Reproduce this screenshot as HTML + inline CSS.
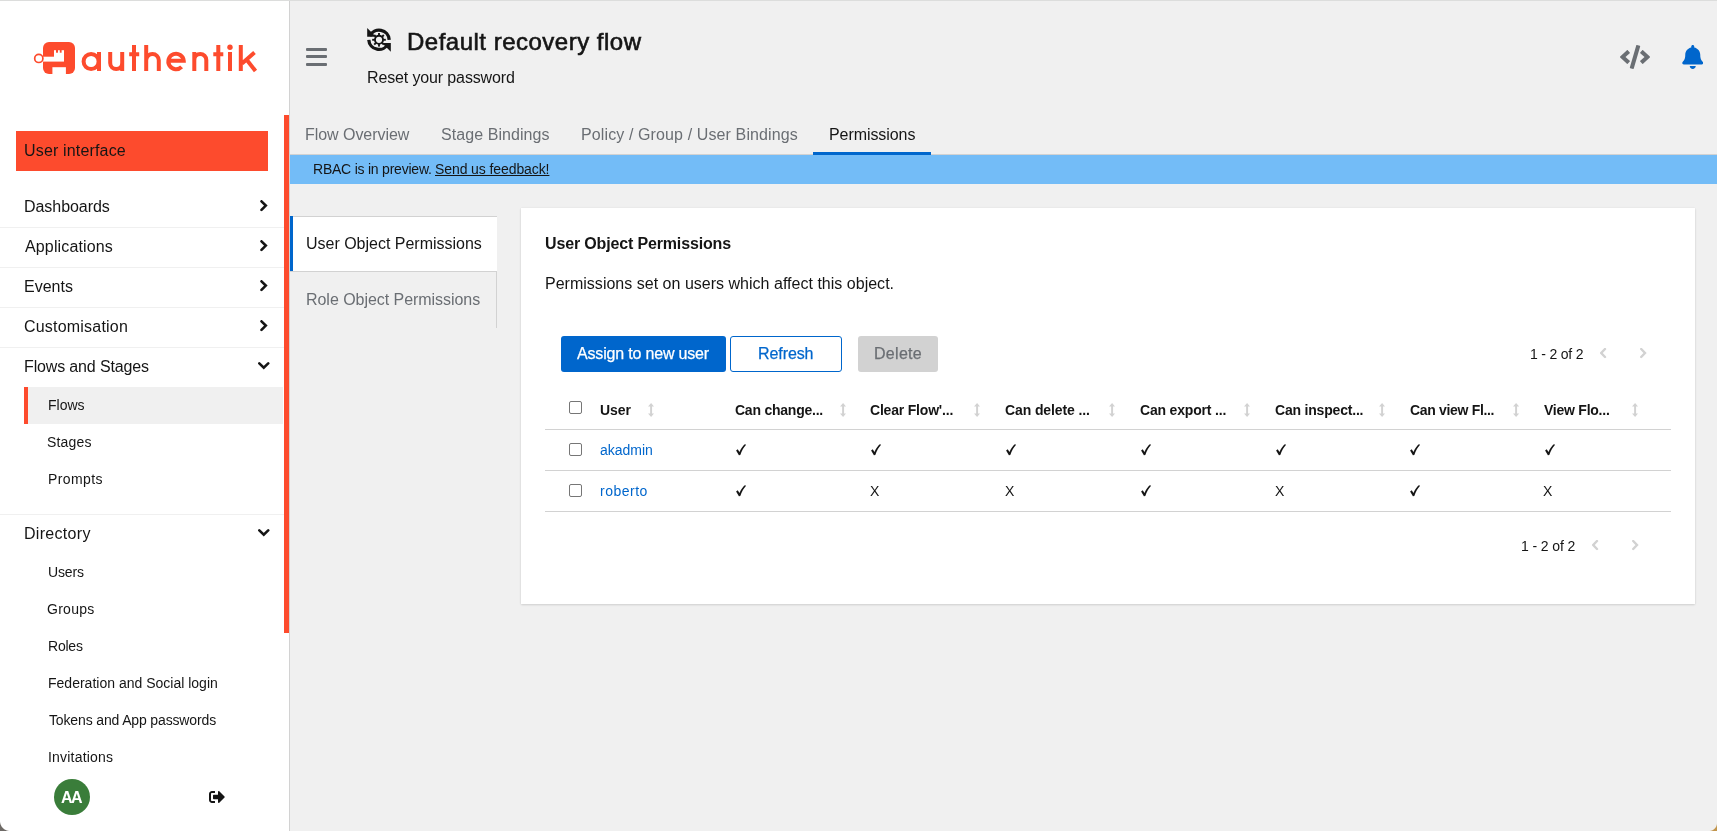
<!DOCTYPE html>
<html><head><meta charset="utf-8">
<style>
*{margin:0;padding:0;box-sizing:border-box}
html,body{width:1717px;height:831px;overflow:hidden;background:#f0f0f0;font-family:"Liberation Sans",sans-serif;color:#151515}
.ab{position:absolute;display:block}
.t{position:absolute;white-space:nowrap;will-change:transform}
.cb{position:absolute;width:13px;height:13px;border:1px solid #767676;border-radius:2px;background:#fff}
</style></head>
<body>
<!-- main bg -->
<div class="ab" style="left:0;top:0;width:1717px;height:831px;background:#f0f0f0"></div>
<!-- sidebar -->
<div class="ab" style="left:0;top:0;width:289px;height:831px;background:#fff"></div>
<div class="ab" style="left:289px;top:0;width:1px;height:831px;background:#d2d2d2"></div>
<!-- sidebar scrollbar -->
<div class="ab" style="left:284px;top:115px;width:5px;height:518px;background:#fd4b2d"></div>
<!-- top line -->
<div class="ab" style="left:0;top:0;width:1717px;height:1px;background:#dcdddc"></div>
<!-- logo -->
<svg class="ab" style="left:0;top:0" width="289" height="100" viewBox="0 0 289 100">
 <g fill="#fd4b2d">
  <rect x="43" y="42" width="32" height="32" rx="6"/>
 </g>
 <g fill="#fff">
  <rect x="43" y="56.7" width="21" height="4.9"/>
  <rect x="54" y="50.2" width="10" height="7"/>
  <rect x="52.4" y="67.2" width="13.5" height="7"/>
 </g>
 <g fill="#fd4b2d">
  <rect x="56" y="49.5" width="2" height="3.2"/>
  <rect x="59.8" y="49.5" width="1.8" height="3.2"/>
 </g>
 <circle cx="38.8" cy="58.4" r="4.1" fill="none" stroke="#fd4b2d" stroke-width="1.7"/>
 <g fill="none" stroke="#fd4b2d" stroke-width="4">
  <circle cx="91.1" cy="61.5" r="7.5"/>
  <path d="M99 52 V71"/>
  <path d="M110.2 52 V63 A6 6 0 0 0 122.2 63 M122.2 52 V71"/>
  <path d="M134 45 V71 M129.2 54.2 H139.2"/>
  <path d="M146.2 45 V71 M146.2 71 V60.3 A6.3 6.3 0 0 1 158.8 60.3 V71"/>
  <path d="M168.3 60.8 H183.7 A7.7 7.7 0 1 0 181.6 66.8"/>
  <path d="M194.3 52 V71 M194.3 71 V60 A6 6 0 0 1 206.3 60 V71"/>
  <path d="M218.3 45 V71 M213.3 54.2 H223.3"/>
  <path d="M230 52 V71"/>
  <path d="M240.8 45 V71 M242 63.5 L254.5 52.5 M246.5 59.5 L255.5 71"/>
 </g>
 <circle cx="230" cy="47.2" r="2.7" fill="#fd4b2d"/>
</svg>
<!-- user interface button -->
<div class="ab" style="left:16px;top:131px;width:252px;height:40px;background:#fd4b2d"></div>
<!-- flows highlight -->
<div class="ab" style="left:24px;top:387px;width:259px;height:37px;background:#f0f0f0"></div>
<div class="ab" style="left:24px;top:387px;width:4px;height:37px;background:#fd4b2d"></div>
<!-- avatar -->
<div class="ab" style="left:54px;top:779px;width:36px;height:36px;border-radius:50%;background:#3a7d3a"></div>
<!-- logout -->
<svg class="ab" style="left:209px;top:789px" width="16" height="16" viewBox="0 0 512 512"><path fill="#151515" d="M497 273L329 441c-15 15-41 4.5-41-17v-96H152c-13.3 0-24-10.7-24-24v-96c0-13.3 10.7-24 24-24h136V88c0-21.4 25.9-32 41-17l168 168c9.3 9.4 9.3 24.6 0 34zM192 436v-40c0-6.6-5.4-12-12-12H96c-17.7 0-32-14.3-32-32V160c0-17.7 14.3-32 32-32h84c6.6 0 12-5.4 12-12V76c0-6.6-5.4-12-12-12H96c-53 0-96 43-96 96v192c0 53 43 96 96 96h84c6.6 0 12-5.4 12-12z"/></svg>

<!-- header hamburger -->
<div class="ab" style="left:306px;top:48px;width:21px;height:3px;border-radius:1px;background:#6a6e73"></div>
<div class="ab" style="left:306px;top:55.3px;width:21px;height:3.2px;border-radius:1px;background:#6a6e73"></div>
<div class="ab" style="left:306px;top:63px;width:21px;height:3px;border-radius:1px;background:#6a6e73"></div>
<!-- sync gear icon -->
<svg class="ab" style="left:363px;top:24px" width="32" height="32" viewBox="0 0 32 32">
 <g fill="none" stroke="#151515" stroke-width="3.3">
  <path d="M6.8 12.0 A10.2 10.2 0 0 1 26.2 15.8"/>
  <path d="M25.2 19.6 A10.2 10.2 0 0 1 5.8 15.8"/>
  <circle cx="16" cy="15.8" r="4.05" stroke-width="1.9"/>
 </g>
 <g fill="#151515">
  <path d="M4.2 3.9 L4.2 12.7 L12.9 12.7 Z"/>
  <path d="M27.8 27.7 L27.8 19.1 L19.1 19.1 Z"/>
  <g transform="translate(16 15.8)">
   <rect x="-0.95" y="-6.8" width="1.9" height="2.6"/>
   <rect x="-0.95" y="-6.8" width="1.9" height="2.6" transform="rotate(45)"/>
   <rect x="-0.95" y="-6.8" width="1.9" height="2.6" transform="rotate(90)"/>
   <rect x="-0.95" y="-6.8" width="1.9" height="2.6" transform="rotate(135)"/>
   <rect x="-0.95" y="-6.8" width="1.9" height="2.6" transform="rotate(180)"/>
   <rect x="-0.95" y="-6.8" width="1.9" height="2.6" transform="rotate(225)"/>
   <rect x="-0.95" y="-6.8" width="1.9" height="2.6" transform="rotate(270)"/>
   <rect x="-0.95" y="-6.8" width="1.9" height="2.6" transform="rotate(315)"/>
  </g>
 </g>
</svg>
<!-- code icon -->
<svg class="ab" style="left:1620px;top:45px" width="30" height="24" viewBox="0 0 640 512"><path fill="#6a6e73" d="M278.9 511.5l-61-17.7c-6.4-1.8-10-8.5-8.2-14.9L346.2 8.7c1.8-6.4 8.5-10 14.9-8.2l61 17.7c6.4 1.8 10 8.5 8.2 14.9L293.8 503.3c-1.9 6.4-8.5 10.1-14.9 8.2zm-114-112.2l43.5-46.4c4.6-4.9 4.300-12.7-.8-17.2L117 256l90.6-79.7c5.1-4.5 5.5-12.3.8-17.2l-43.5-46.4c-4.5-4.8-12.1-5.1-17-.5L3.8 247.2c-5.1 4.7-5.1 12.8 0 17.5l144.1 135.1c4.9 4.6 12.5 4.4 17-.5zm327.2.6l144.1-135.1c5.1-4.7 5.1-12.8 0-17.5L492.1 112.1c-4.8-4.5-12.4-4.3-17 .5L431.6 159c-4.6 4.9-4.3 12.7.8 17.2L523 256l-90.6 79.7c-5.1 4.5-5.5 12.3-.8 17.2l43.5 46.4c4.5 4.9 12.1 5.1 17 .6z"/></svg>
<!-- bell -->
<svg class="ab" style="left:1681.5px;top:45px" width="21.5" height="24" viewBox="0 0 448 512"><path fill="#0066cc" d="M224 512c35.32 0 63.97-28.65 63.970-64H160.03c0 35.35 28.65 64 63.97 64zm215.39-149.71c-19.32-20.76-55.47-51.99-55.47-154.29 0-77.7-54.48-139.9-127.94-155.16V32c0-17.67-14.32-32-31.98-32s-31.98 14.33-31.98 32v20.84C118.56 68.1 64.08 130.3 64.08 208c0 102.3-36.15 133.53-55.47 154.29-6 6.45-8.66 14.16-8.610 21.71.11 16.4 12.98 32 32.1 32h383.8c19.12 0 32-15.6 32.1-32 .05-7.55-2.61-15.27-8.61-21.71z"/></svg>

<!-- tab bar border + active underline -->
<div class="ab" style="left:290px;top:154px;width:1427px;height:1px;background:#d2d2d2"></div>
<div class="ab" style="left:813px;top:152px;width:118px;height:3px;background:#0066cc"></div>
<!-- banner -->
<div class="ab" style="left:290px;top:155px;width:1427px;height:29px;background:#73bcf7"></div>

<!-- vertical tabs -->
<div class="ab" style="left:290px;top:216px;width:207px;height:56px;background:#fff;border-top:1px solid #d2d2d2"></div>
<div class="ab" style="left:290px;top:216px;width:3px;height:56px;background:#0066cc"></div>
<div class="ab" style="left:290px;top:271px;width:207px;height:1px;background:#d2d2d2"></div>
<div class="ab" style="left:496px;top:271px;width:1px;height:57px;background:#d2d2d2"></div>

<!-- card -->
<div class="ab" style="left:521px;top:208px;width:1174px;height:396px;background:#fff;box-shadow:0 1px 2px 0 rgba(3,3,3,.12),0 0 2px 0 rgba(3,3,3,.06)"></div>
<!-- buttons -->
<div class="ab" style="left:561px;top:336px;width:165px;height:36px;background:#0066cc;border-radius:3px"></div>
<div class="ab" style="left:730px;top:336px;width:112px;height:36px;background:#fff;border:1px solid #0066cc;border-radius:3px"></div>
<div class="ab" style="left:858px;top:336px;width:80px;height:36px;background:#d2d2d2;border-radius:3px"></div>
<!-- table lines -->
<div class="ab" style="left:545px;top:429px;width:1126px;height:1px;background:#d2d2d2"></div>
<div class="ab" style="left:545px;top:470px;width:1126px;height:1px;background:#d2d2d2"></div>
<div class="ab" style="left:545px;top:511px;width:1126px;height:1px;background:#d2d2d2"></div>

<div class="ab" style="left:0;top:227px;width:284px;height:1px;background:#f0f0f0"></div>
<div class="ab" style="left:0;top:267px;width:284px;height:1px;background:#f0f0f0"></div>
<div class="ab" style="left:0;top:307px;width:284px;height:1px;background:#f0f0f0"></div>
<div class="ab" style="left:0;top:347px;width:284px;height:1px;background:#f0f0f0"></div>
<div class="ab" style="left:0;top:514px;width:284px;height:1px;background:#f0f0f0"></div>
<svg class="ab" style="left:259.5px;top:199.6px" width="8" height="12" viewBox="0 0 8 12"><path d="M1.5 1.3 L5.8 5.6 L1.5 9.9" stroke="#151515" stroke-width="2.6" fill="none" stroke-linecap="round" stroke-linejoin="miter"/></svg>
<svg class="ab" style="left:259.5px;top:239.6px" width="8" height="12" viewBox="0 0 8 12"><path d="M1.5 1.3 L5.8 5.6 L1.5 9.9" stroke="#151515" stroke-width="2.6" fill="none" stroke-linecap="round" stroke-linejoin="miter"/></svg>
<svg class="ab" style="left:259.5px;top:279.6px" width="8" height="12" viewBox="0 0 8 12"><path d="M1.5 1.3 L5.8 5.6 L1.5 9.9" stroke="#151515" stroke-width="2.6" fill="none" stroke-linecap="round" stroke-linejoin="miter"/></svg>
<svg class="ab" style="left:259.5px;top:319.6px" width="8" height="12" viewBox="0 0 8 12"><path d="M1.5 1.3 L5.8 5.6 L1.5 9.9" stroke="#151515" stroke-width="2.6" fill="none" stroke-linecap="round" stroke-linejoin="miter"/></svg>
<svg class="ab" style="left:258px;top:361.5px" width="12" height="8" viewBox="0 0 12 8"><path d="M1.3 1.4 L5.75 5.6 L10.2 1.4" stroke="#151515" stroke-width="2.6" fill="none" stroke-linecap="round"/></svg>
<svg class="ab" style="left:258px;top:528.5px" width="12" height="8" viewBox="0 0 12 8"><path d="M1.3 1.4 L5.75 5.6 L10.2 1.4" stroke="#151515" stroke-width="2.6" fill="none" stroke-linecap="round"/></svg>
<div class="cb" style="left:569px;top:401px"></div>
<div class="cb" style="left:569px;top:443px"></div>
<div class="cb" style="left:569px;top:484px"></div>
<svg class="ab" style="left:648.1px;top:403px" width="6.2" height="14" viewBox="0 0 7 14" preserveAspectRatio="none"><path d="M3.5 0 L7 3.6 L4.6 3.6 L4.6 10.4 L7 10.4 L3.5 14 L0 10.4 L2.4 10.4 L2.4 3.6 L0 3.6 Z" fill="#d2d2d2"/></svg>
<svg class="ab" style="left:840.1px;top:403px" width="6.2" height="14" viewBox="0 0 7 14" preserveAspectRatio="none"><path d="M3.5 0 L7 3.6 L4.6 3.6 L4.6 10.4 L7 10.4 L3.5 14 L0 10.4 L2.4 10.4 L2.4 3.6 L0 3.6 Z" fill="#d2d2d2"/></svg>
<svg class="ab" style="left:974.1px;top:403px" width="6.2" height="14" viewBox="0 0 7 14" preserveAspectRatio="none"><path d="M3.5 0 L7 3.6 L4.6 3.6 L4.6 10.4 L7 10.4 L3.5 14 L0 10.4 L2.4 10.4 L2.4 3.6 L0 3.6 Z" fill="#d2d2d2"/></svg>
<svg class="ab" style="left:1109.3px;top:403px" width="6.2" height="14" viewBox="0 0 7 14" preserveAspectRatio="none"><path d="M3.5 0 L7 3.6 L4.6 3.6 L4.6 10.4 L7 10.4 L3.5 14 L0 10.4 L2.4 10.4 L2.4 3.6 L0 3.6 Z" fill="#d2d2d2"/></svg>
<svg class="ab" style="left:1243.8999999999999px;top:403px" width="6.2" height="14" viewBox="0 0 7 14" preserveAspectRatio="none"><path d="M3.5 0 L7 3.6 L4.6 3.6 L4.6 10.4 L7 10.4 L3.5 14 L0 10.4 L2.4 10.4 L2.4 3.6 L0 3.6 Z" fill="#d2d2d2"/></svg>
<svg class="ab" style="left:1378.8px;top:403px" width="6.2" height="14" viewBox="0 0 7 14" preserveAspectRatio="none"><path d="M3.5 0 L7 3.6 L4.6 3.6 L4.6 10.4 L7 10.4 L3.5 14 L0 10.4 L2.4 10.4 L2.4 3.6 L0 3.6 Z" fill="#d2d2d2"/></svg>
<svg class="ab" style="left:1513.3999999999999px;top:403px" width="6.2" height="14" viewBox="0 0 7 14" preserveAspectRatio="none"><path d="M3.5 0 L7 3.6 L4.6 3.6 L4.6 10.4 L7 10.4 L3.5 14 L0 10.4 L2.4 10.4 L2.4 3.6 L0 3.6 Z" fill="#d2d2d2"/></svg>
<svg class="ab" style="left:1632.1px;top:403px" width="6.2" height="14" viewBox="0 0 7 14" preserveAspectRatio="none"><path d="M3.5 0 L7 3.6 L4.6 3.6 L4.6 10.4 L7 10.4 L3.5 14 L0 10.4 L2.4 10.4 L2.4 3.6 L0 3.6 Z" fill="#d2d2d2"/></svg>
<svg class="ab" style="left:736.3px;top:443.5px" width="11" height="12" viewBox="0 0 11 12"><path d="M0.1 6.5 L1.7 5.3 L3.5 7.9 C4.9 4.7 6.8 1.9 9.1 0.0 L9.9 1.0 C7.7 3.3 5.7 6.7 4.3 11.1 L2.9 11.2 Z" fill="#151515"/></svg>
<svg class="ab" style="left:870.9px;top:443.5px" width="11" height="12" viewBox="0 0 11 12"><path d="M0.1 6.5 L1.7 5.3 L3.5 7.9 C4.9 4.7 6.8 1.9 9.1 0.0 L9.9 1.0 C7.7 3.3 5.7 6.7 4.3 11.1 L2.9 11.2 Z" fill="#151515"/></svg>
<svg class="ab" style="left:1006.1px;top:443.5px" width="11" height="12" viewBox="0 0 11 12"><path d="M0.1 6.5 L1.7 5.3 L3.5 7.9 C4.9 4.7 6.8 1.9 9.1 0.0 L9.9 1.0 C7.7 3.3 5.7 6.7 4.3 11.1 L2.9 11.2 Z" fill="#151515"/></svg>
<svg class="ab" style="left:1140.7px;top:443.5px" width="11" height="12" viewBox="0 0 11 12"><path d="M0.1 6.5 L1.7 5.3 L3.5 7.9 C4.9 4.7 6.8 1.9 9.1 0.0 L9.9 1.0 C7.7 3.3 5.7 6.7 4.3 11.1 L2.9 11.2 Z" fill="#151515"/></svg>
<svg class="ab" style="left:1275.6px;top:443.5px" width="11" height="12" viewBox="0 0 11 12"><path d="M0.1 6.5 L1.7 5.3 L3.5 7.9 C4.9 4.7 6.8 1.9 9.1 0.0 L9.9 1.0 C7.7 3.3 5.7 6.7 4.3 11.1 L2.9 11.2 Z" fill="#151515"/></svg>
<svg class="ab" style="left:1410.2px;top:443.5px" width="11" height="12" viewBox="0 0 11 12"><path d="M0.1 6.5 L1.7 5.3 L3.5 7.9 C4.9 4.7 6.8 1.9 9.1 0.0 L9.9 1.0 C7.7 3.3 5.7 6.7 4.3 11.1 L2.9 11.2 Z" fill="#151515"/></svg>
<svg class="ab" style="left:1544.5px;top:443.5px" width="11" height="12" viewBox="0 0 11 12"><path d="M0.1 6.5 L1.7 5.3 L3.5 7.9 C4.9 4.7 6.8 1.9 9.1 0.0 L9.9 1.0 C7.7 3.3 5.7 6.7 4.3 11.1 L2.9 11.2 Z" fill="#151515"/></svg>
<svg class="ab" style="left:736.3px;top:484.5px" width="11" height="12" viewBox="0 0 11 12"><path d="M0.1 6.5 L1.7 5.3 L3.5 7.9 C4.9 4.7 6.8 1.9 9.1 0.0 L9.9 1.0 C7.7 3.3 5.7 6.7 4.3 11.1 L2.9 11.2 Z" fill="#151515"/></svg>
<svg class="ab" style="left:1140.7px;top:484.5px" width="11" height="12" viewBox="0 0 11 12"><path d="M0.1 6.5 L1.7 5.3 L3.5 7.9 C4.9 4.7 6.8 1.9 9.1 0.0 L9.9 1.0 C7.7 3.3 5.7 6.7 4.3 11.1 L2.9 11.2 Z" fill="#151515"/></svg>
<svg class="ab" style="left:1410.2px;top:484.5px" width="11" height="12" viewBox="0 0 11 12"><path d="M0.1 6.5 L1.7 5.3 L3.5 7.9 C4.9 4.7 6.8 1.9 9.1 0.0 L9.9 1.0 C7.7 3.3 5.7 6.7 4.3 11.1 L2.9 11.2 Z" fill="#151515"/></svg>
<svg class="ab" style="left:1599.5px;top:348px" width="7" height="11" viewBox="0 0 7 11"><path d="M5 1 L1.2 5 L5 9" stroke="#d2d2d2" stroke-width="2.4" fill="none" stroke-linecap="round"/></svg>
<svg class="ab" style="left:1639.5px;top:348px" width="7" height="11" viewBox="0 0 7 11"><path d="M1.2 1 L5 5 L1.2 9" stroke="#d2d2d2" stroke-width="2.4" fill="none" stroke-linecap="round"/></svg>
<svg class="ab" style="left:1591.5px;top:540px" width="7" height="11" viewBox="0 0 7 11"><path d="M5 1 L1.2 5 L5 9" stroke="#d2d2d2" stroke-width="2.4" fill="none" stroke-linecap="round"/></svg>
<svg class="ab" style="left:1631.5px;top:540px" width="7" height="11" viewBox="0 0 7 11"><path d="M1.2 1 L5 5 L1.2 9" stroke="#d2d2d2" stroke-width="2.4" fill="none" stroke-linecap="round"/></svg>
<div class="t" id="t0" style="left:23.95px;top:143.46px;font-size:16px;line-height:16px;font-weight:400;color:#151515;letter-spacing:0.162px;">User interface</div>
<div class="t" id="t1" style="left:23.95px;top:199.26px;font-size:16px;line-height:16px;font-weight:400;color:#151515;letter-spacing:-0.053px;">Dashboards</div>
<div class="t" id="t2" style="left:24.95px;top:239.26px;font-size:16px;line-height:16px;font-weight:400;color:#151515;letter-spacing:0.139px;">Applications</div>
<div class="t" id="t3" style="left:23.95px;top:279.26px;font-size:16px;line-height:16px;font-weight:400;color:#151515;letter-spacing:-0.003px;">Events</div>
<div class="t" id="t4" style="left:24.25px;top:319.26px;font-size:16px;line-height:16px;font-weight:400;color:#151515;letter-spacing:0.202px;">Customisation</div>
<div class="t" id="t5" style="left:23.95px;top:359.26px;font-size:16px;line-height:16px;font-weight:400;color:#151515;letter-spacing:-0.145px;">Flows and Stages</div>
<div class="t" id="t6" style="left:47.65px;top:398.15px;font-size:14px;line-height:14px;font-weight:400;color:#151515;letter-spacing:0.010px;">Flows</div>
<div class="t" id="t7" style="left:47.25px;top:435.15px;font-size:14px;line-height:14px;font-weight:400;color:#151515;letter-spacing:0.183px;">Stages</div>
<div class="t" id="t8" style="left:47.65px;top:472.15px;font-size:14px;line-height:14px;font-weight:400;color:#151515;letter-spacing:0.379px;">Prompts</div>
<div class="t" id="t9" style="left:23.95px;top:526.26px;font-size:16px;line-height:16px;font-weight:400;color:#151515;letter-spacing:0.299px;">Directory</div>
<div class="t" id="t10" style="left:47.65px;top:565.15px;font-size:14px;line-height:14px;font-weight:400;color:#151515;letter-spacing:-0.165px;">Users</div>
<div class="t" id="t11" style="left:47.25px;top:602.15px;font-size:14px;line-height:14px;font-weight:400;color:#151515;letter-spacing:0.278px;">Groups</div>
<div class="t" id="t12" style="left:47.65px;top:639.15px;font-size:14px;line-height:14px;font-weight:400;color:#151515;letter-spacing:-0.223px;">Roles</div>
<div class="t" id="t13" style="left:47.65px;top:676.15px;font-size:14px;line-height:14px;font-weight:400;color:#151515;letter-spacing:0.005px;">Federation and Social login</div>
<div class="t" id="t14" style="left:48.65px;top:713.15px;font-size:14px;line-height:14px;font-weight:400;color:#151515;letter-spacing:-0.144px;">Tokens and App passwords</div>
<div class="t" id="t15" style="left:47.65px;top:750.15px;font-size:14px;line-height:14px;font-weight:400;color:#151515;letter-spacing:0.197px;">Invitations</div>
<div class="t" id="t16" style="left:407.40px;top:29.68px;font-size:24px;line-height:24px;font-weight:400;color:#151515;letter-spacing:0.497px;-webkit-text-stroke:0.6px #151515;">Default recovery flow</div>
<div class="t" id="t17" style="left:366.80px;top:69.96px;font-size:16px;line-height:16px;font-weight:400;color:#151515;letter-spacing:-0.133px;">Reset your password</div>
<div class="t" id="t18" style="left:305.15px;top:127.46px;font-size:16px;line-height:16px;font-weight:400;color:#6a6e73;letter-spacing:-0.046px;">Flow Overview</div>
<div class="t" id="t19" style="left:441.45px;top:127.46px;font-size:16px;line-height:16px;font-weight:400;color:#6a6e73;letter-spacing:0.067px;">Stage Bindings</div>
<div class="t" id="t20" style="left:581.20px;top:127.46px;font-size:16px;line-height:16px;font-weight:400;color:#6a6e73;letter-spacing:0.116px;">Policy / Group / User Bindings</div>
<div class="t" id="t21" style="left:829.00px;top:127.46px;font-size:16px;line-height:16px;font-weight:400;color:#151515;letter-spacing:-0.073px;">Permissions</div>
<div class="t" id="t22" style="left:313.40px;top:161.85px;font-size:14px;line-height:14px;font-weight:400;color:#151515;letter-spacing:-0.225px;">RBAC is in preview.</div>
<div class="t" id="t23" style="left:435.40px;top:161.85px;font-size:14px;line-height:14px;font-weight:400;color:#151515;letter-spacing:-0.093px;text-decoration:underline;text-underline-offset:1px;">Send us feedback!</div>
<div class="t" id="t24" style="left:305.60px;top:236.46px;font-size:16px;line-height:16px;font-weight:400;color:#151515;letter-spacing:-0.011px;">User Object Permissions</div>
<div class="t" id="t25" style="left:305.60px;top:292.46px;font-size:16px;line-height:16px;font-weight:400;color:#6a6e73;letter-spacing:-0.044px;">Role Object Permissions</div>
<div class="t" id="t26" style="left:544.70px;top:236.46px;font-size:16px;line-height:16px;font-weight:700;color:#151515;letter-spacing:-0.151px;">User Object Permissions</div>
<div class="t" id="t27" style="left:544.50px;top:276.16px;font-size:16px;line-height:16px;font-weight:400;color:#151515;letter-spacing:0.015px;">Permissions set on users which affect this object.</div>
<div class="t" id="t28" style="left:577.35px;top:346.16px;font-size:16px;line-height:16px;font-weight:400;color:#ffffff;letter-spacing:-0.180px;-webkit-text-stroke:0.25px #fff;">Assign to new user</div>
<div class="t" id="t29" style="left:758.20px;top:346.16px;font-size:16px;line-height:16px;font-weight:400;color:#0066cc;letter-spacing:-0.087px;-webkit-text-stroke:0.25px #0066cc;">Refresh</div>
<div class="t" id="t30" style="left:874.00px;top:346.16px;font-size:16px;line-height:16px;font-weight:400;color:#6a6e73;letter-spacing:0.290px;-webkit-text-stroke:0.25px #6a6e73;">Delete</div>
<div class="t" id="t31" style="left:1530.00px;top:346.95px;font-size:14px;line-height:14px;font-weight:400;color:#151515;letter-spacing:-0.197px;">1 - 2 of 2</div>
<div class="t" id="t32" style="left:1521.15px;top:538.85px;font-size:14px;line-height:14px;font-weight:400;color:#151515;letter-spacing:-0.108px;">1 - 2 of 2</div>
<div class="t" id="t33" style="left:600.45px;top:403.15px;font-size:14px;line-height:14px;font-weight:700;color:#151515;letter-spacing:-0.028px;">User</div>
<div class="t" id="t34" style="left:735.25px;top:403.15px;font-size:14px;line-height:14px;font-weight:700;color:#151515;letter-spacing:-0.236px;">Can change...</div>
<div class="t" id="t35" style="left:869.85px;top:403.15px;font-size:14px;line-height:14px;font-weight:700;color:#151515;letter-spacing:-0.192px;">Clear Flow'...</div>
<div class="t" id="t36" style="left:1005.05px;top:403.15px;font-size:14px;line-height:14px;font-weight:700;color:#151515;letter-spacing:-0.113px;">Can delete ...</div>
<div class="t" id="t37" style="left:1139.65px;top:403.15px;font-size:14px;line-height:14px;font-weight:700;color:#151515;letter-spacing:-0.184px;">Can export ...</div>
<div class="t" id="t38" style="left:1274.90px;top:403.15px;font-size:14px;line-height:14px;font-weight:700;color:#151515;letter-spacing:-0.195px;">Can inspect...</div>
<div class="t" id="t39" style="left:1409.50px;top:403.15px;font-size:14px;line-height:14px;font-weight:700;color:#151515;letter-spacing:-0.323px;">Can view Fl...</div>
<div class="t" id="t40" style="left:1544.15px;top:403.15px;font-size:14px;line-height:14px;font-weight:700;color:#151515;letter-spacing:-0.241px;">View Flo...</div>
<div class="t" id="t41" style="left:600.45px;top:442.65px;font-size:14px;line-height:14px;font-weight:400;color:#0066cc;letter-spacing:-0.022px;">akadmin</div>
<div class="t" id="t42" style="left:600.45px;top:483.75px;font-size:14px;line-height:14px;font-weight:400;color:#0066cc;letter-spacing:0.505px;">roberto</div>
<div class="t" id="t43" style="left:61.30px;top:789.76px;font-size:16px;line-height:16px;font-weight:700;color:#ffffff;letter-spacing:-1.600px;">AA</div>
<div class="t" id="t44" style="left:869.65px;top:483.85px;font-size:14px;line-height:14px;font-weight:400;color:#151515;letter-spacing:0.000px;">X</div>
<div class="t" id="t45" style="left:1004.85px;top:483.85px;font-size:14px;line-height:14px;font-weight:400;color:#151515;letter-spacing:0.000px;">X</div>
<div class="t" id="t46" style="left:1274.70px;top:483.85px;font-size:14px;line-height:14px;font-weight:400;color:#151515;letter-spacing:0.000px;">X</div>
<div class="t" id="t47" style="left:1543.25px;top:483.85px;font-size:14px;line-height:14px;font-weight:400;color:#151515;letter-spacing:0.000px;">X</div>
<!-- window corners -->
<div class="ab" style="left:0;top:821px;width:10px;height:10px;background:radial-gradient(circle at 10px 0px, rgba(0,0,0,0) 9.5px, #6e6a66 10.5px)"></div>
<div class="ab" style="left:1709px;top:823px;width:8px;height:8px;background:radial-gradient(circle at 0px 0px, rgba(0,0,0,0) 7.5px, #c2964e 8.5px)"></div>
</body></html>
